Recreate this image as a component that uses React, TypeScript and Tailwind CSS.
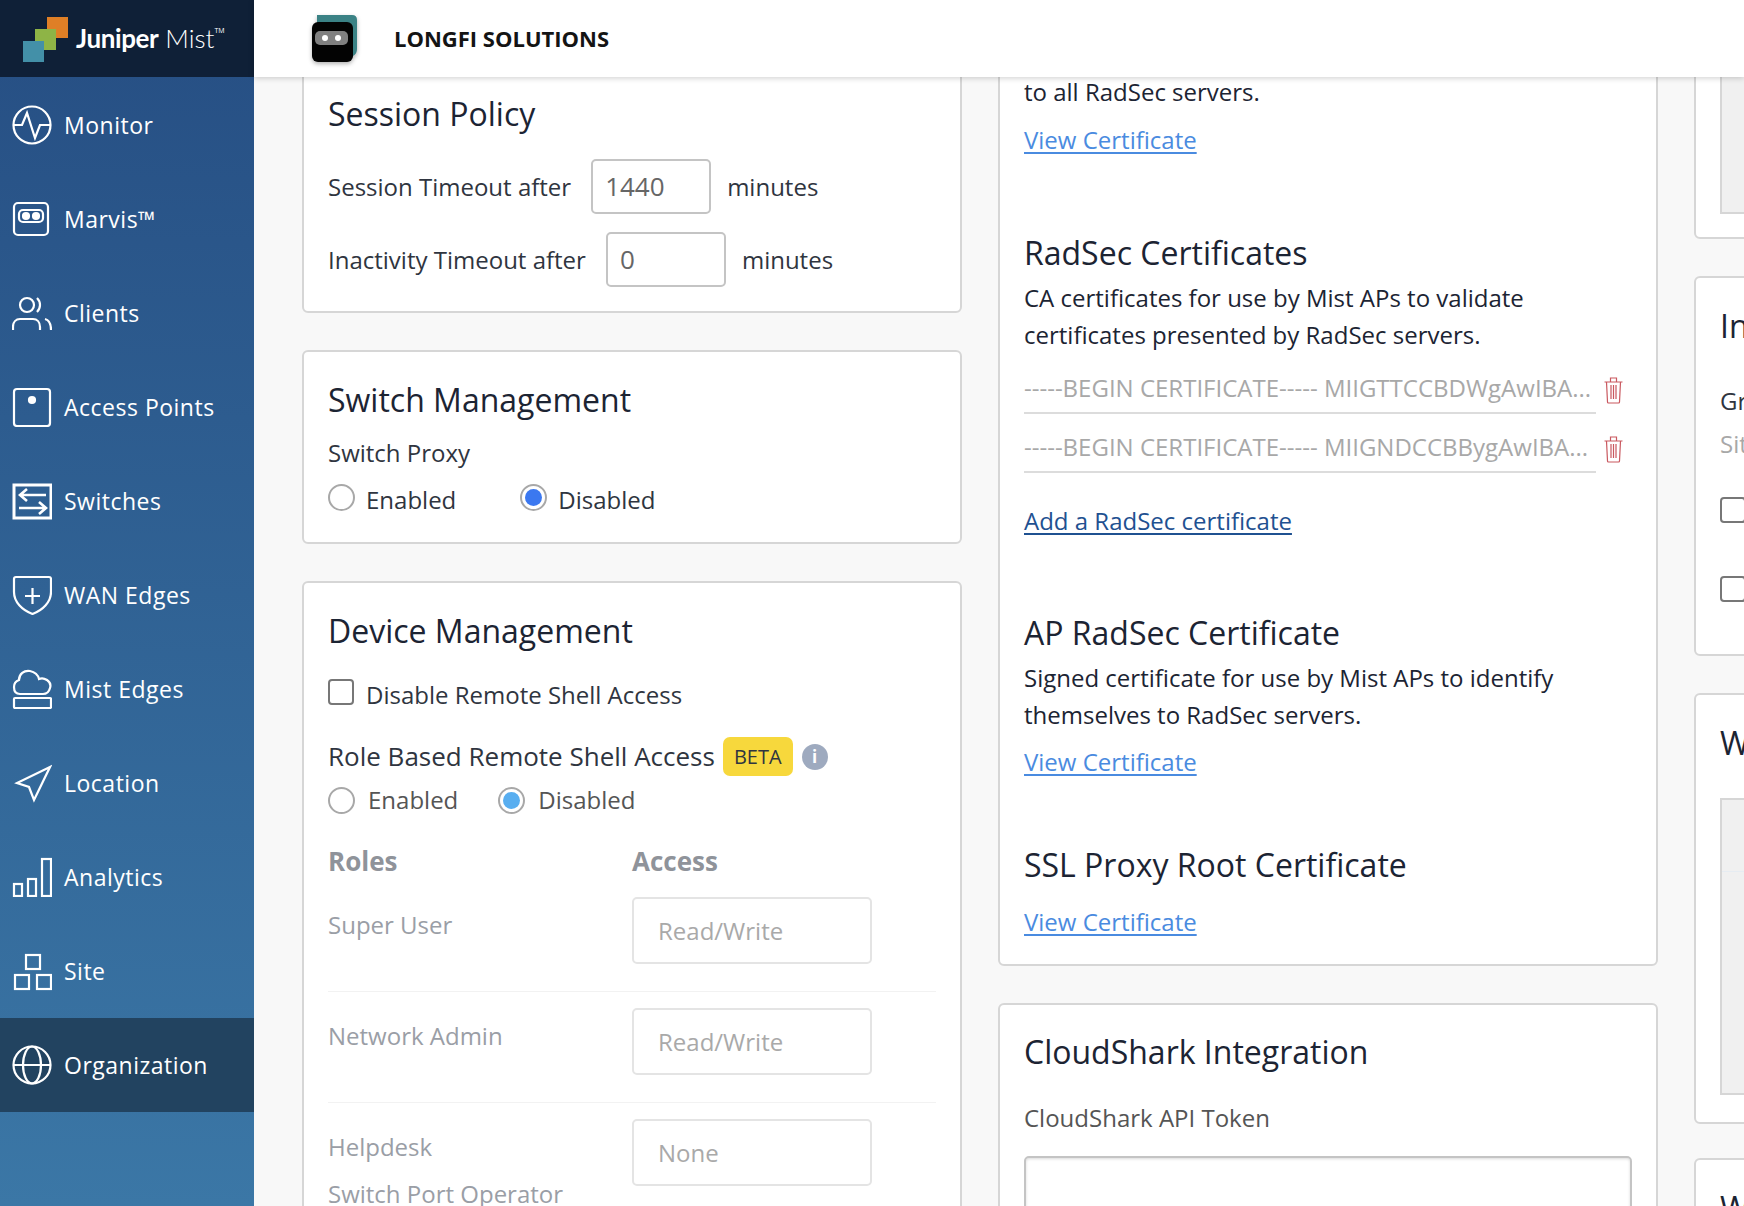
import { ReactNode } from "react"

const navItems: { label: string; icon: ReactNode }[] = [
  {
    label: "Monitor",
    icon: (
      <>
        <circle cx="20" cy="20" r="18.5" />
        <path d="M1 20h9l5-12 8 25 5-13h11" />
      </>
    ),
  },
  {
    label: "Marvis™",
    icon: (
      <>
        <rect x="2" y="4" width="34" height="32" rx="4" />
        <rect x="7" y="11" width="24" height="12" rx="4" />
        <circle cx="14" cy="17" r="3" fill="white" />
        <circle cx="24" cy="17" r="3" fill="white" />
      </>
    ),
  },
  {
    label: "Clients",
    icon: (
      <>
        <circle cx="15" cy="12" r="7" />
        <path d="M25 5c4 4 4 10 0 14" />
        <path d="M1 37v-3c0-5 3-8 7-8h13c4 0 7 3 7 8v3" />
        <path d="M33 26c4 1 6 4 6 11" />
      </>
    ),
  },
  {
    label: "Access Points",
    icon: (
      <>
        <rect x="2" y="2" width="36" height="37" rx="3" />
        <circle cx="20" cy="13" r="3" fill="white" />
      </>
    ),
  },
  {
    label: "Switches",
    icon: (
      <>
        <rect x="2" y="4" width="37" height="33" strokeWidth="3" />
        <path d="M34 14H8M15 8l-7 6 7 6" strokeWidth="2.6" />
        <path d="M7 27h27M27 21l7 6-7 6" strokeWidth="2.6" />
      </>
    ),
  },
  {
    label: "WAN Edges",
    icon: (
      <>
        <path d="M4 2h33q2 0 2 2v13c0 10-8 18-18.500 22C10 35 2 27 2 17V4q0-2 2-2z" />
        <path d="M20.500 13v16M13 21h15" />
      </>
    ),
  },
  {
    label: "Mist Edges",
    icon: (
      <>
        <path d="M8 25c-4 0-6-3-6-7 0-3 2-6 5-7 0-6 5-10 11-9 5 1 8 4 9 8 2-1 5-1 8 1 3 2 4 5 3 8-1 4-3 6-7 6z" />
        <rect x="2" y="29" width="37" height="10" rx="1" />
      </>
    ),
  },
  {
    label: "Location",
    icon: <path d="M38 4 5 20l12 4 5 13z" />,
  },
  {
    label: "Analytics",
    icon: (
      <>
        <rect x="2" y="27" width="8" height="12" />
        <rect x="16" y="22" width="8" height="17" />
        <rect x="30" y="2" width="9" height="37" />
      </>
    ),
  },
  {
    label: "Site",
    icon: (
      <>
        <rect x="14" y="4" width="14" height="14" />
        <rect x="3" y="24" width="14" height="14" />
        <rect x="25" y="24" width="14" height="14" />
      </>
    ),
  },
  {
    label: "Organization",
    icon: (
      <>
        <circle cx="20" cy="20" r="18.500" />
        <ellipse cx="20" cy="20" rx="9" ry="18.500" />
        <path d="M2 20h36" />
      </>
    ),
  },
]

function Card({ className, children }: { className: string; children: ReactNode }) {
  return (
    <section className={`rounded-[6px] border-2 border-[#d6d6d6] bg-white px-[24px] ${className}`}>
      {children}
    </section>
  )
}

function Title({ children, className = "" }: { children: ReactNode; className?: string }) {
  return <h2 className={`text-[32px] leading-[44px] text-[#1c2433] ${className}`}>{children}</h2>
}

function Radio({ label, on, tone, raised }: { label: string; on?: boolean; tone?: string; raised?: boolean }) {
  return (
    <span className={`flex items-center ${raised ? "gap-[11px]" : "gap-[13px]"}`}>
      <span
        className={`flex h-[27px] w-[27px] items-center justify-center rounded-full border-2 border-[#a8a8a8] bg-white ${raised ? "-translate-y-[3px]" : ""}`}
      >
        {on && <span className={`h-[17px] w-[17px] rounded-full ${tone}`} />}
      </span>
      {label}
    </span>
  )
}

function RoleRow({ name, value, extra, line }: { name: string; value: string; extra?: string; line?: boolean }) {
  return (
    <div className={`flex h-[111px] pt-[16px] ${line ? "border-b border-[#f2f2f2]" : ""}`}>
      <div className="w-[304px] pt-[10px] text-[#9a9ea6]">
        <div>{name}</div>
        {extra && <div className="mt-[11px]">{extra}</div>}
      </div>
      <div className="flex h-[67px] w-[240px] items-center rounded-[5px] border-2 border-[#e4e4e4] bg-white pl-[24px] text-[#a9a9a9]">
        {value}
      </div>
    </div>
  )
}

function CertRow({ text }: { text: string }) {
  return (
    <div className="flex items-end">
      <div className="flex h-[59px] w-[572px] items-end border-b-2 border-[#dcdcdc] pb-[6px] text-[#a8a8a8] whitespace-nowrap">
        {text}
      </div>
      <svg viewBox="0 0 20 28" className="mb-[10px] ml-[7px] h-[28px] w-[21px]" fill="none" stroke="#c9585f" strokeWidth="1.2">
        <path d="M1 6h18M7 6V2h6v4M3 6l1 20q0 1 1 1h10q1 0 1-1l1-20M7.500 9v14M10 9v14M12.500 9v14" />
      </svg>
    </div>
  )
}

function Link({ children, dark }: { children: ReactNode; dark?: boolean }) {
  return <a className={`underline underline-offset-[3px] ${dark ? "text-[#1f5191]" : "text-[#4a8be0]"}`}>{children}</a>
}

export default function App() {
  return (
    <div className="flex h-[1206px] w-[1744px] overflow-hidden bg-[#f8f8f8] text-[24px] text-[#2f3540] [font-family:'Open_Sans',sans-serif]">
      <aside className="flex w-[254px] shrink-0 flex-col bg-gradient-to-b from-[#264e83] to-[#3b77a6] text-white">
        <div className="flex h-[77px] items-center bg-[#0f2037] pl-[23px]">
          <svg viewBox="0 0 45 45" className="mt-[1px] h-[45px] w-[45px] shrink-0">
            <path d="M24 0H45V21H33V12H24Z" fill="#df7f26" />
            <path d="M12 12H33V33H21V24H12Z" fill="#8eb446" />
            <rect x="0" y="24" width="21" height="21" fill="#4390a8" />
          </svg>
          <span className="ml-[8px] text-[26px] font-bold tracking-[-0.4px] [font-family:Lato,sans-serif]">Juniper</span>
          <span className="ml-[7px] text-[26px] font-light [font-family:Lato,sans-serif]">Mist</span>
          <span className="mb-[14px] text-[7px]">TM</span>
        </div>
        <nav className="pt-[1px]">
          {navItems.map((item) => (
            <div
              key={item.label}
              className={`flex h-[94px] items-center gap-[12px] pl-[12px] text-[23px] tracking-[0.5px] ${item.label === "Organization" ? "bg-[#224360]" : ""}`}
            >
              <svg viewBox="0 0 40 40" className="h-[40px] w-[40px] shrink-0" fill="none" stroke="white" strokeWidth="2.2">
                {item.icon}
              </svg>
              {item.label}
            </div>
          ))}
        </nav>
      </aside>

      <div className="flex min-w-0 flex-1 flex-col">
        <header className="relative z-10 flex h-[77px] shrink-0 items-center bg-white pl-[58px] shadow-[0_1px_6px_rgba(0,0,0,0.2)]">
          <svg viewBox="0 0 45 47" className="h-[47px] w-[45px] drop-shadow-[0_2px_2px_rgba(0,0,0,0.3)]">
            <path d="M5 0H40q5 0 5 5V34q0 5-4 7L38 45H5z" fill="#3b8285" />
            <rect x="0" y="7" width="41" height="40" rx="6" fill="#030303" />
            <rect x="3" y="16" width="33" height="14" rx="5" fill="#808080" />
            <circle cx="13" cy="23" r="3" fill="white" />
            <circle cx="26" cy="23" r="3" fill="white" />
          </svg>
          <span className="ml-[37px] text-[22px] font-bold text-[#141414]">LONGFI SOLUTIONS</span>
        </header>

        <main className="flex min-h-0 flex-1 items-start gap-x-[36px] overflow-hidden pl-[48px]">
          <div className="flex w-[660px] shrink-0 flex-col gap-[37px]">
            <Card className="-mt-[20px] h-[256px] pt-[33px]">
              <Title>Session Policy</Title>
              <div className="mt-[23px] flex items-center">
                Session Timeout after
                <span className="ml-[20px] mr-[16px] flex h-[55px] w-[120px] items-center rounded-[5px] border-2 border-[#c4c4c4] pl-[12px] text-[26px] text-[#666]">1440</span>
                minutes
              </div>
              <div className="mt-[18px] flex items-center">
                Inactivity Timeout after
                <span className="ml-[20px] mr-[16px] flex h-[55px] w-[120px] items-center rounded-[5px] border-2 border-[#c4c4c4] pl-[12px] text-[26px] text-[#666]">0</span>
                minutes
              </div>
            </Card>

            <Card className="h-[194px] pt-[26px]">
              <Title>Switch Management</Title>
              <div className="mt-[13px]">Switch Proxy</div>
              <div className="mt-[11px] flex gap-[64px]">
                <Radio label="Enabled" raised />
                <Radio label="Disabled" on tone="bg-[#3b78f0]" raised />
              </div>
            </Card>

            <Card className="pb-[200px] pt-[26px]">
              <Title>Device Management</Title>
              <div className="mt-[24px] flex items-center gap-[12px]">
                <span className="h-[26px] w-[26px] -translate-y-[3px] rounded-[4px] border-2 border-[#777]" />
                Disable Remote Shell Access
              </div>
              <div className="mt-[24px] flex items-center text-[26px]">
                Role Based Remote Shell Access
                <span className="ml-[8px] rounded-[7px] bg-[#f7d83c] px-[11px] py-[4px] text-[20px] leading-[31px]">BETA</span>
                <span className="ml-[9px] flex h-[26px] w-[26px] items-center justify-center rounded-full bg-[#9eaabf] text-[17px] font-bold text-white">i</span>
              </div>
              <div className="mt-[6px] flex gap-[40px] text-[#555]">
                <Radio label="Enabled" />
                <Radio label="Disabled" on tone="bg-[#58aef0]" />
              </div>
              <div className="mt-[24px] flex text-[26px] font-bold text-[#8f939a]">
                <div className="w-[304px]">Roles</div>
                <div>Access</div>
              </div>
              <RoleRow name="Super User" value="Read/Write" line />
              <RoleRow name="Network Admin" value="Read/Write" line />
              <RoleRow name="Helpdesk" value="None" extra="Switch Port Operator" />
            </Card>
          </div>

          <div className="flex w-[660px] shrink-0 flex-col gap-[37px]">
            <Card className="-mt-[20px] h-[909px] pt-[14px] text-[#1c2433]">
              <p className="leading-[37px]">to all RadSec servers.</p>
              <p className="mt-[12px]"><Link>View Certificate</Link></p>
              <Title className="mt-[73px]">RadSec Certificates</Title>
              <p className="mt-[4px] leading-[37px]">CA certificates for use by Mist APs to validate certificates presented by RadSec servers.</p>
              <div className="mt-[2px]">
                <CertRow text="-----BEGIN CERTIFICATE----- MIIGTTCCBDWgAwIBA..." />
                <CertRow text="-----BEGIN CERTIFICATE----- MIIGNDCCBBygAwIBA..." />
              </div>
              <p className="mt-[30px]"><Link dark>Add a RadSec certificate</Link></p>
              <Title className="mt-[72px]">AP RadSec Certificate</Title>
              <p className="mt-[4px] leading-[37px]">Signed certificate for use by Mist APs to identify themselves to RadSec servers.</p>
              <p className="mt-[11px]"><Link>View Certificate</Link></p>
              <Title className="mt-[63px]">SSL Proxy Root Certificate</Title>
              <p className="mt-[17px]"><Link>View Certificate</Link></p>
            </Card>

            <Card className="h-[400px] pt-[25px]">
              <Title>CloudShark Integration</Title>
              <div className="mt-[26px] text-[#555]">CloudShark API Token</div>
              <div className="mt-[20px] h-[120px] w-[608px] rounded-[5px] border-2 border-[#c4c4c4] shadow-[inset_0_1px_3px_rgba(0,0,0,0.15)]" />
            </Card>
          </div>

          <div className="flex w-[660px] shrink-0 flex-col gap-[37px]">
            <Card className="-mt-[20px] h-[182px]">
              <div className="h-[155px] border-2 border-t-0 border-[#d6d6d6] bg-[#f0f0f0]" />
            </Card>
            <Card className="h-[380px] pt-[26px]">
              <Title>Inventory</Title>
              <div className="mt-[36px] leading-[33px]">Group</div>
              <div className="mt-[10px] leading-[33px] text-[#a8a8a8]">Site</div>
              <div className="mt-[37px] h-[26px] w-[26px] rounded-[4px] border-2 border-[#777]" />
              <div className="mt-[53px] h-[26px] w-[26px] rounded-[4px] border-2 border-[#777]" />
            </Card>
            <Card className="h-[431px] pt-[26px]">
              <Title>Webhooks</Title>
              <div className="mt-[33px] h-[297px] border-2 border-[#d6d6d6] bg-[#f0f0f0]">
                <div className="h-[72px] border-b border-[#e6ecf2]" />
              </div>
            </Card>
            <Card className="-mt-[3px] h-[200px] pt-[26px]">
              <Title>Webhooks</Title>
            </Card>
          </div>
        </main>
      </div>
    </div>
  )
}
